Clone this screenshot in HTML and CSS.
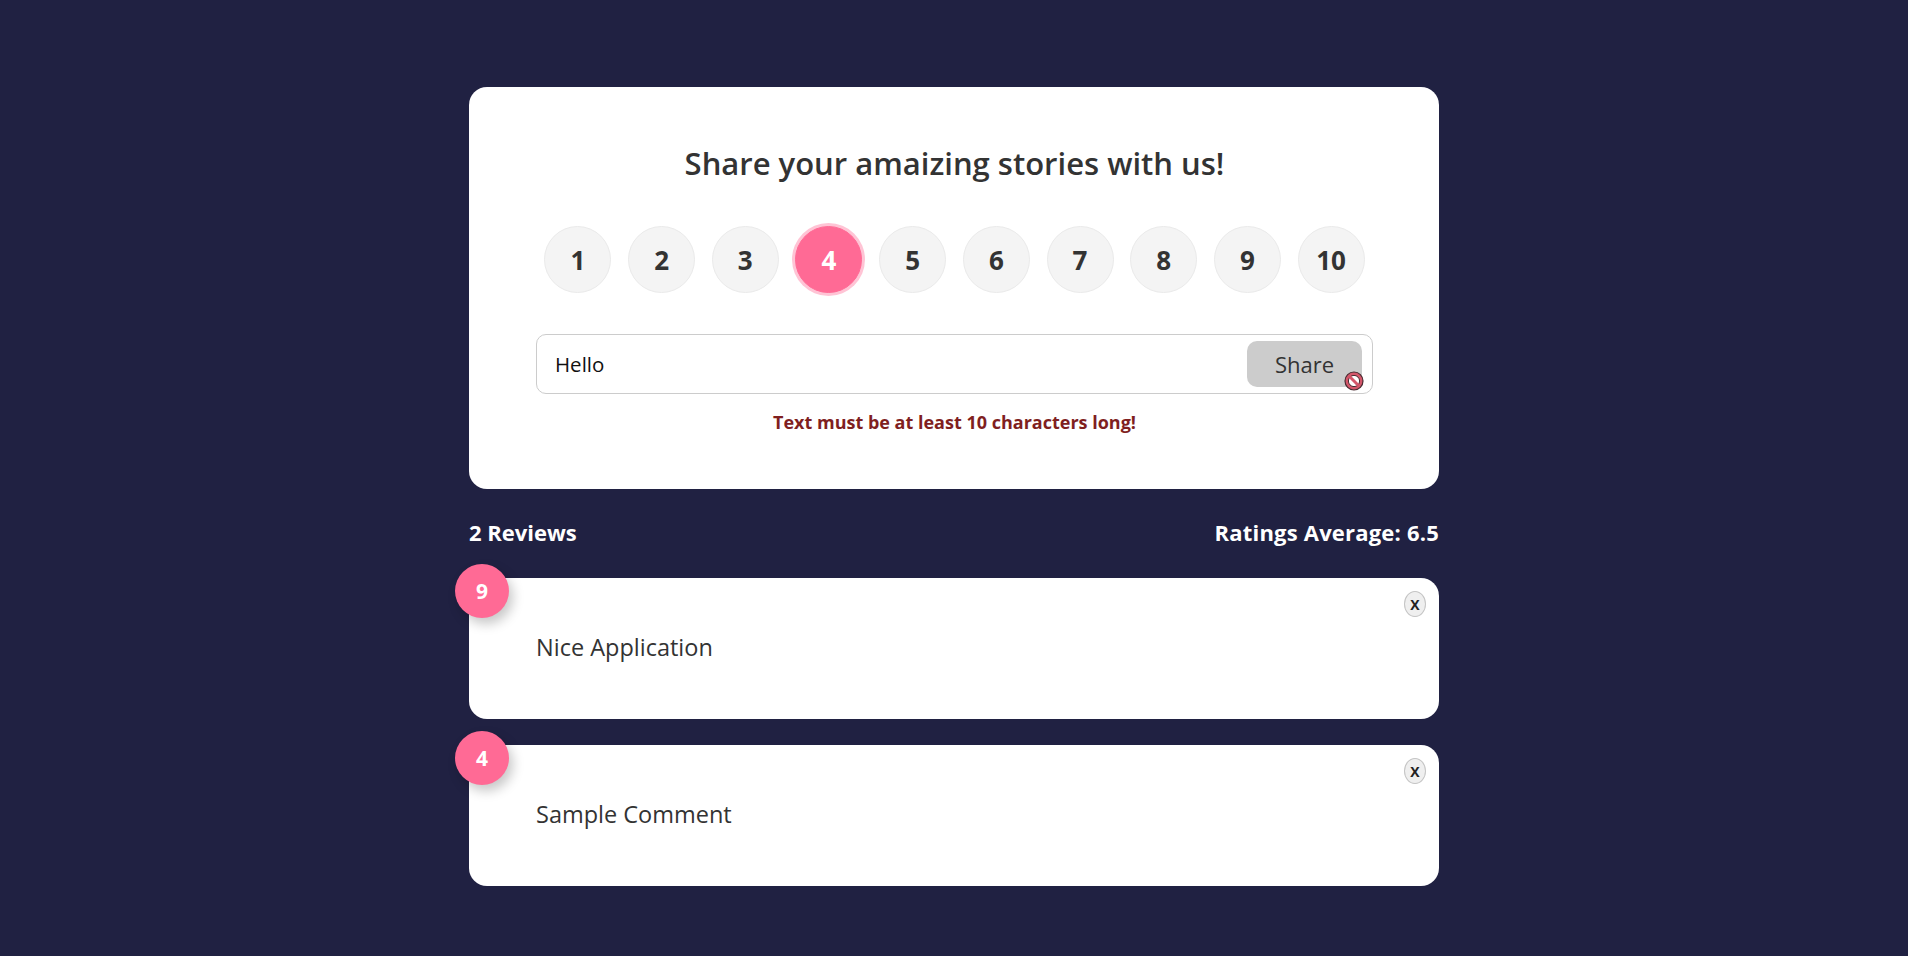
FILE: index.html
```html
<!DOCTYPE html>
<html lang="en">
<head>
<meta charset="utf-8">
<title>Feedback UI</title>
<link rel="stylesheet" href="styles.css">
</head>
<body>
<div class="container">
  <div class="card form-card">
    <h2 class="title">Share your amaizing stories with us!</h2>
    <ul class="rating">
      <li>1</li>
      <li>2</li>
      <li>3</li>
      <li class="selected">4</li>
      <li>5</li>
      <li>6</li>
      <li>7</li>
      <li>8</li>
      <li>9</li>
      <li>10</li>
    </ul>
    <div class="input-group">
      <span class="input-text">Hello</span>
      <button class="btn" disabled>Share</button>
      <svg class="cursor" width="22" height="22" viewBox="0 0 22 22" aria-hidden="true">
        <circle cx="11" cy="11" r="9" fill="#d4566a" stroke="#4a2a30" stroke-width="1.2"/>
        <circle cx="11" cy="11" r="5.6" fill="#ffffff" stroke="#4a2a30" stroke-width="1"/>
        <line x1="6.8" y1="6.8" x2="15.2" y2="15.2" stroke="#d4566a" stroke-width="3"/>
      </svg>
    </div>
    <div class="message">Text must be at least 10 characters long!</div>
  </div>

  <div class="stats">
    <h4>2 Reviews</h4>
    <h4>Ratings Average: 6.5</h4>
  </div>

  <div class="card review">
    <div class="num-display">9</div>
    <button class="close">X</button>
    <div class="text-display">Nice Application</div>
  </div>

  <div class="card review">
    <div class="num-display">4</div>
    <button class="close">X</button>
    <div class="text-display">Sample Comment</div>
  </div>
</div>
</body>
</html>
```

FILE: styles.css
```css
* {
  box-sizing: border-box;
  margin: 0;
  padding: 0;
}

body {
  background-color: #202142;
  font-family: "Open Sans", "Noto Sans", sans-serif;
  color: #333;
}

.container {
  width: 970px;
  margin: 0 auto;
  padding-top: 87px;
}

.card {
  background-color: #fff;
  border-radius: 18px;
  position: relative;
}

.form-card {
  height: 402px;
  padding: 56px 66px 0 67px;
}

.title {
  text-align: center;
  font-size: 31px;
  font-weight: 600;
  line-height: 40px;
  color: #333;
}

.rating {
  list-style: none;
  display: flex;
  justify-content: center;
  gap: 16.7px;
  margin-top: 43px;
}

.rating li {
  width: 67px;
  height: 67px;
  border-radius: 50%;
  background: #f4f4f4;
  border: 1px solid #eaeaea;
  display: flex;
  align-items: center;
  justify-content: center;
  font-size: 26px;
  font-weight: 700;
  color: #333;
}

.rating li.selected {
  background: #ff6a95;
  border-color: #ff6a95;
  color: #fff;
  box-shadow: 0 0 0 3px #ffc4d5;
}

.input-group {
  position: relative;
  margin-top: 41px;
  height: 60px;
  border: 1px solid #ccc;
  border-radius: 10px;
  display: flex;
  align-items: center;
  justify-content: space-between;
  padding: 0 10px 0 18px;
}

.input-text {
  font-size: 20.5px;
  color: #111;
}

.btn {
  width: 115px;
  height: 46px;
  border: none;
  border-radius: 10px;
  background: #cccccc;
  color: #333;
  font-family: inherit;
  font-size: 22px;
}

.cursor {
  position: absolute;
  right: 7px;
  bottom: 1px;
}

.message {
  text-align: center;
  color: #801f1f;
  font-weight: 700;
  font-size: 18px;
  line-height: 26px;
  margin-top: 15px;
}

.stats {
  display: flex;
  justify-content: space-between;
  align-items: center;
  color: #fff;
  margin-top: 31px;
  height: 24px;
}

.stats h4 {
  font-size: 22px;
  font-weight: 700;
  line-height: 24px;
}

.stats h4 + h4 {
  letter-spacing: 0.2px;
}

.review {
  height: 141px;
  margin-top: 34px;
  display: flex;
  align-items: center;
  padding-left: 67px;
  padding-bottom: 3px;
}

.review + .review {
  margin-top: 26px;
}

.num-display {
  position: absolute;
  top: -14px;
  left: -14px;
  width: 54px;
  height: 54px;
  border-radius: 50%;
  background: #ff6a95;
  color: #fff;
  display: flex;
  align-items: center;
  justify-content: center;
  font-size: 21px;
  font-weight: 700;
  box-shadow: 4px 6px 12px rgba(0, 0, 0, 0.22);
}

.close {
  position: absolute;
  top: 13px;
  right: 13px;
  width: 22px;
  height: 26px;
  border-radius: 50%;
  background: #efefef;
  border: 1px solid #c4c4c4;
  font-family: inherit;
  font-weight: 700;
  font-size: 14px;
  color: #222;
  display: flex;
  align-items: center;
  justify-content: center;
}

.text-display {
  font-size: 23.5px;
  color: #333;
}
```
